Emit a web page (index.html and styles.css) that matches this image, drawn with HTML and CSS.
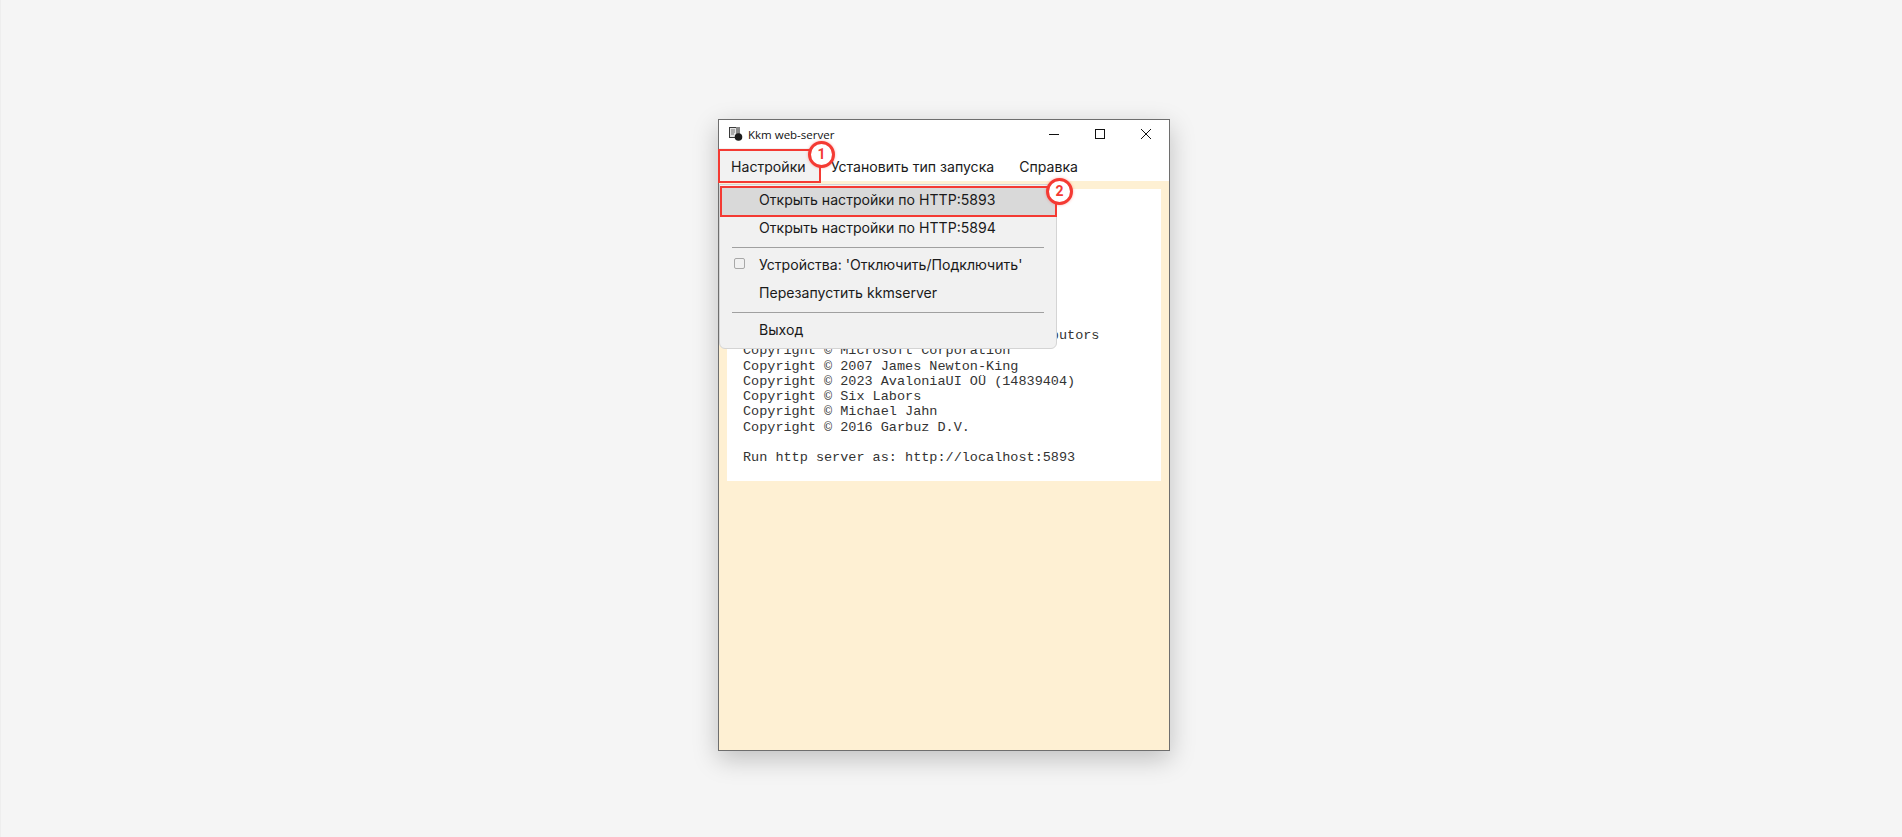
FILE: index.html
```html
<!DOCTYPE html>
<html lang="ru">
<head>
<meta charset="utf-8">
<title>Kkm web-server</title>
<link rel="stylesheet" href="styles.css">
</head>
<body>
<main class="window">
  <header class="titlebar">
    <div class="title">
      <svg class="app-icon" width="14" height="14" viewBox="0 0 14 14">
        <rect x="0.5" y="0.5" width="9" height="10" fill="#e4e4e4" stroke="#3a3a3a"/>
        <rect x="7" y="0" width="4" height="8" fill="#8a8a8a"/>
        <path d="M2 3h4M2 5h4M2 7h3" stroke="#777" fill="none"/>
        <circle cx="9.5" cy="10" r="3.8" fill="#1c1c1c"/>
      </svg>
      <span>Kkm web-server</span>
    </div>
    <div class="controls">
      <svg width="12" height="12" viewBox="0 0 12 12"><path d="M1 6.5h10" stroke="#111" fill="none"/></svg>
      <svg width="12" height="12" viewBox="0 0 12 12"><rect x="1.5" y="1.5" width="9" height="9" stroke="#111" fill="none"/></svg>
      <svg width="12" height="12" viewBox="0 0 12 12"><path d="M1 1l10 10M11 1L1 11" stroke="#111" fill="none"/></svg>
    </div>
  </header>
  <nav class="menubar">
    <span class="menu-item active">Настройки</span>
    <span class="menu-item">Установить тип запуска</span>
    <span class="menu-item">Справка</span>
  </nav>
  <section class="content">
    <pre class="log">Copyright © .NET Foundation and Contributors
Copyright © Microsoft Corporation
Copyright © 2007 James Newton-King
Copyright © 2023 AvaloniaUI OÜ (14839404)
Copyright © Six Labors
Copyright © Michael Jahn
Copyright © 2016 Garbuz D.V.

Run http server as: http://localhost:5893</pre>
  </section>

  <div class="dropdown">
    <div class="drop-item hover">Открыть настройки по HTTP:5893</div>
    <div class="drop-item">Открыть настройки по HTTP:5894</div>
    <hr class="sep">
    <div class="drop-item"><span class="check"></span>Устройства: 'Отключить/Подключить'</div>
    <div class="drop-item">Перезапустить kkmserver</div>
    <hr class="sep">
    <div class="drop-item">Выход</div>
  </div>

  <div class="mark mark-one"></div>
  <div class="mark mark-two"></div>
  <div class="badge badge-one">1</div>
  <div class="badge badge-two">2</div>
</main>
</body>
</html>
```
FILE: styles.css
```css
* { box-sizing: border-box; }
html, body { height: 100%; }
body {
  margin: 0;
  padding: 119px 0 0 717px;
  background: #f5f5f5;
  border-left: 1px solid #eeeeee;
  overflow: hidden;
  font-family: Inter, Roboto, "Liberation Sans", sans-serif;
  color: #1a1a1a;
}
.window {
  position: relative;
  width: 452px;
  height: 632px;
  border: 1px solid #6e6e6e;
  background: #fef0d3;
  box-shadow: 0 8px 24px rgba(0, 0, 0, 0.22);
  display: flex;
  flex-direction: column;
}
.titlebar {
  height: 28px;
  background: #fff;
  display: flex;
  align-items: center;
  justify-content: space-between;
  padding: 0 17px 0 10px;
}
.title {
  display: flex;
  align-items: center;
  gap: 5px;
  font-family: "Open Sans", sans-serif;
  font-size: 11.5px;
  color: #111;
}
.app-icon { display: block; }
.controls { display: flex; gap: 34px; }
.controls svg { display: block; }
.menubar {
  height: 33px;
  background: #fff;
  display: flex;
  align-items: center;
  font-size: 14.1px;
  padding-top: 3px;
}
.menu-item { padding: 0 13px 0 12px; white-space: nowrap; }
.menu-item.active {
  background: #f2f2f2;
  align-self: stretch;
  display: flex;
  align-items: center;
  margin-top: -3px;
  padding-top: 3px;
}
.content {
  flex: 1;
  padding: 8px 8px 0;
}
.log {
  margin: 0;
  height: 292px;
  padding: 139px 16px 0;
  background: #fff;
  font-family: "Liberation Mono", "Courier New", monospace;
  font-size: 13.5px;
  line-height: 15.3px;
  color: #333;
}
.dropdown {
  position: absolute;
  left: 0;
  top: 64px;
  width: 338px;
  height: 165px;
  padding: 0 0 1px;
  background: #f1f1f1;
  border: 1px solid #d4d4d4;
  border-radius: 0 0 6px 6px;
  font-size: 14.1px;
}
.drop-item {
  position: relative;
  height: 28.5px;
  display: flex;
  align-items: center;
  padding-left: 39px;
  white-space: nowrap;
}
.drop-item.hover {
  background: #d9d9d9;
  margin-top: 1px;
  margin-bottom: -1px;
  padding-bottom: 1px;
}
.sep {
  height: 1px;
  border: 0;
  margin: 5px 12px 2px;
  background: #a0a0a0;
}
.check {
  position: absolute;
  left: 14px;
  top: 8px;
  width: 11px;
  height: 11px;
  border: 1px solid #a8a8a8;
  border-radius: 2px;
  background: #f1f1f1;
}
.mark {
  position: absolute;
  border: 2.5px solid #f43a33;
}
.mark-one { left: -1px; top: 29px; width: 103px; height: 34px; }
.mark-two { left: 1px; top: 66px; width: 337px; height: 31px; }
.badge {
  position: absolute;
  width: 27px;
  height: 27px;
  border-radius: 50%;
  background: #fff;
  border: 3px solid #f43a33;
  box-shadow: 0 0 3px rgba(244, 58, 51, 0.4);
  color: #f43a33;
  font: 700 14px/21px Roboto, sans-serif;
  text-align: center;
}
.badge-one { left: 89px; top: 21px; }
.badge-two { left: 327px; top: 58px; }
```
